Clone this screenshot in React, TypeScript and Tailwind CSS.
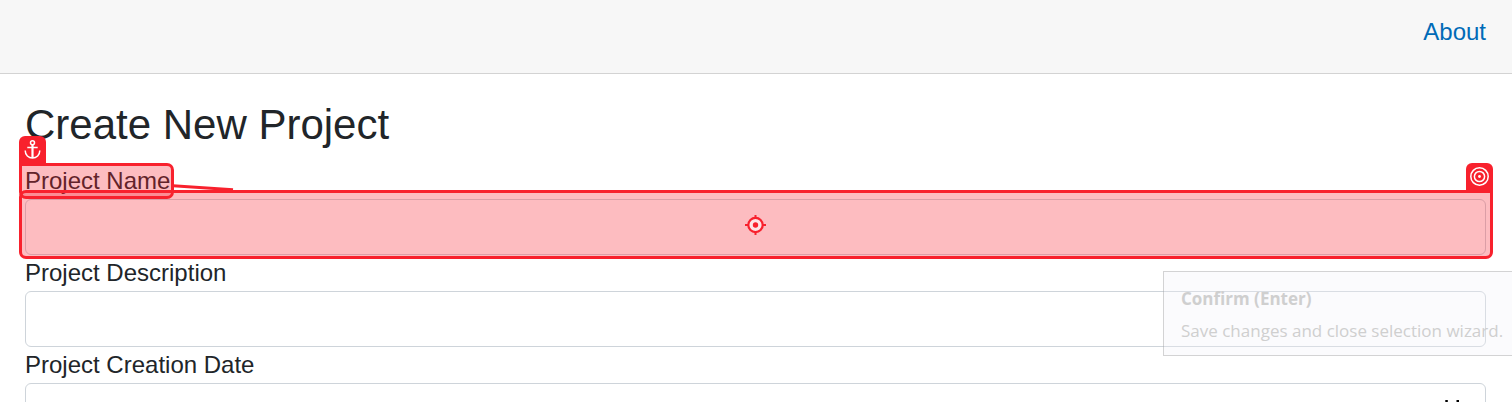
import React from "react";

function Field({ label, children }: { label: string; children?: React.ReactNode }) {
  return (
    <div>
      <label className="block h-9 text-[24px] leading-[36px]">{label}</label>
      <div className="flex h-14 justify-end rounded-[6px] border border-[#ced4da] pr-[24px] pt-[16px]">{children}</div>
    </div>
  );
}

function AnchorBadge() {
  return (
    <div className="h-[27px] w-[27px] rounded-t-[6px] bg-[#f8212d]">
      <svg width="27" height="27" viewBox="0 0 27 27" fill="none" stroke="white" strokeWidth="1.5">
        <circle cx="13.5" cy="6.8" r="2" />
        <path d="M8.3 11.4H18.7M6.2 14.6C6.2 19.2 9.5 22 13.5 22S20.8 19.2 20.8 14.6" />
        <path d="M13.5 8.8V22" strokeWidth="2.2" />
      </svg>
    </div>
  );
}

function TargetBadge() {
  return (
    <div className="h-[27px] w-[27px] rounded-t-[6px] bg-[#f8212d]">
      <svg width="27" height="27" viewBox="0 0 27 27" fill="none" stroke="white" strokeWidth="1.5">
        <circle cx="13.5" cy="13.5" r="8.7" />
        <circle cx="13.5" cy="13.5" r="5.1" />
        <circle cx="13.5" cy="13.5" r="1.4" fill="white" stroke="none" />
      </svg>
    </div>
  );
}

export default function App() {
  return (
    <div className="relative h-[402px] overflow-hidden bg-white font-['Liberation_Sans',Arial,sans-serif] text-[#212529]">
      <header className="flex h-[74px] justify-end border-b border-[#d3d3d3] bg-[#f7f7f7] pr-[26px] pt-[14px]">
        <a className="text-[24px] leading-[36px] text-[#006bb7]">About</a>
      </header>
      <main className="flex flex-col pt-[26px] pr-[26px] pl-[25px]">
        <h1 className="h-[63px] text-[42px] leading-[50px]">Create New Project</h1>
        <Field label="Project Name" />
        <Field label="Project Description" />
        <Field label="Project Creation Date">
          <svg width="18" height="24" viewBox="0 0 18 24" fill="black">
            <path d="M2.3 0h2.5v3h8.7V0H16v3h2v19H0V3h2.3zM2 8v12h14V8z" />
          </svg>
        </Field>
      </main>

      {/* Selection highlights over the form */}
      <div className="absolute inset-x-[19px] top-[136px] flex flex-col">
        <AnchorBadge />
        <div className="flex">
          <div className="z-10 h-9 w-[155px] rounded-[7px] rounded-tl-none border-[3px] border-[#f8212d] bg-[#f8212d]/30" />
          <svg className="mt-[17px] -ml-px" width="62" height="14" viewBox="0 0 62 14">
            <path d="M0 5.8L60 9.8" stroke="#f8212d" strokeWidth="3" />
          </svg>
          <div className="ml-auto">
            <TargetBadge />
          </div>
        </div>
        <div className="-mt-[9px] flex h-[69px] items-center justify-center rounded-[7px] rounded-tr-none border-[3px] border-[#f8212d] bg-[#f8212d]/30 pr-px">
          <svg width="21" height="20" viewBox="0 0 21 20">
            <path d="M10.5 0V20M0 10H21" stroke="#f8212d" strokeWidth="2" />
            <circle cx="10.5" cy="10" r="7.2" fill="#fde4e6" stroke="#f8212d" strokeWidth="2.2" />
            <circle cx="10.5" cy="10" r="2.7" fill="#f8212d" />
          </svg>
        </div>
      </div>

      {/* Fading tooltip */}
      <div className="absolute top-[271px] left-[1163px] h-[85px] w-[360px] border border-[#777]/30 bg-[#f1f1f8]/30 pt-[11px] pl-[17px] font-['Open_Sans',sans-serif] text-[17px] leading-[32px] whitespace-nowrap text-[#cfcfcf]">
        <div className="font-bold">Confirm (Enter)</div>
        <div>Save changes and close selection wizard.</div>
      </div>
    </div>
  );
}
